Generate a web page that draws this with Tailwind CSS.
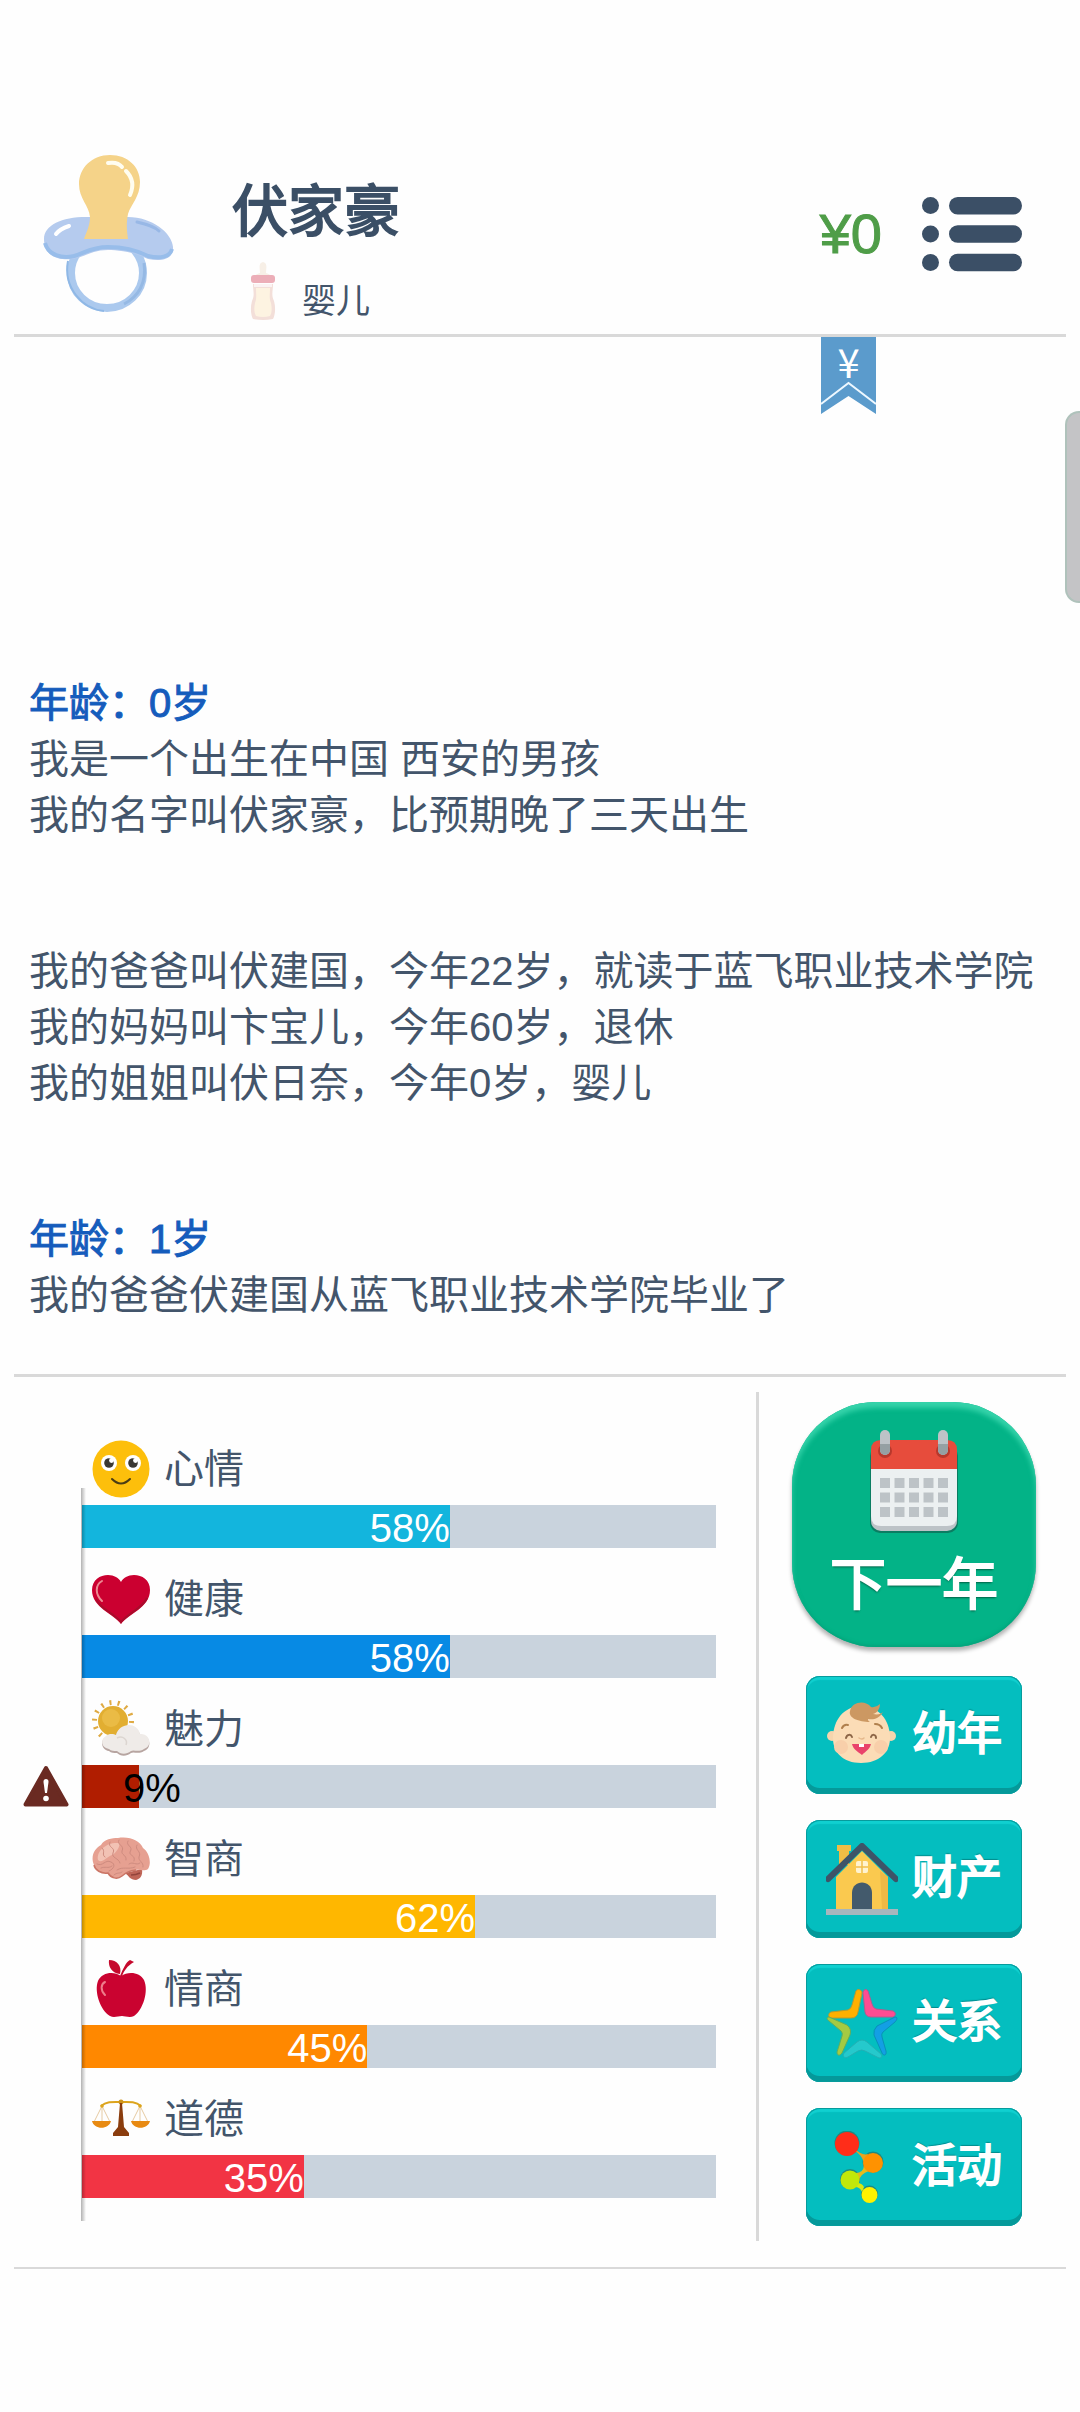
<!DOCTYPE html>
<html lang="zh-CN">
<head>
  <meta charset="UTF-8" />
  <meta name="viewport" content="width=device-width, initial-scale=1.0"/>
  <title>人生模拟</title>
  <script src="https://cdn.jsdelivr.net/npm/@tailwindcss/browser@4"></script>
</head>
<body class="bg-[#fefefe] min-h-screen text-[#43556b] font-['Liberation_Sans','Noto_Sans_CJK_SC',sans-serif]">
  <main class="relative px-[14px]">

    <!-- 顶部：头像、姓名、金钱 -->
    <header class="flex items-start pt-[155px] pb-[14px] pl-7 pr-11 border-b-3 border-[#d9d9d9]">
      <svg class="w-[134px] h-[158px] shrink-0" viewBox="0 0 134 158" aria-hidden="true">
        <ellipse cx="65" cy="118" rx="36" ry="35" fill="none" stroke="#abc9ee" stroke-width="8"/>
        <path d="M26 106C21 132 40 154 62 156" fill="none" stroke="#8fb8e6" stroke-width="2"/>
        <path d="M102 108C105 128 96 142 82 149" fill="none" stroke="#95b9e4" stroke-width="3"/>
        <path d="M2 84C2 70 20 62 44 62H86C110 62 130 78 131 92C132 104 120 107 106 104C92 97 76 95 66 95C50 95 42 102 32 104C14 106 2 100 2 84Z" fill="#b5cbee"/>
        <path d="M3 88C6 100 20 104 32 101C42 98 50 92 66 92C78 92 94 95 106 101C118 104 128 102 130 94" fill="none" stroke="#98bdea" stroke-width="4"/>
        <path d="M95 67C104 69 112 71 117 76" fill="none" stroke="#98b8e6" stroke-width="3" stroke-linecap="round"/>
        <path d="M14 79C17 75 21 73 27 71" fill="none" stroke="#fff" stroke-width="4" stroke-linecap="round"/>
        <path d="M68 0C50 0 37 13 37 29C37 44 47 50 48 62C48 71 44 78 42 84H86C85 76 84 69 86 59C89 49 98 42 98 27C98 12 86 0 68 0Z" fill="#f5d389"/>
        <path d="M66 8C72 7 77 8 80 12" fill="none" stroke="#fffdf0" stroke-width="4" stroke-linecap="round"/>
        <path d="M84 16C91 23 92 31 88 40" fill="none" stroke="#fffdf0" stroke-width="4" stroke-linecap="round"/>
      </svg>
      <div class="flex-1 pt-[25px] pl-14">
        <h1 class="text-[56px] leading-[64px] text-[#3b4f66] [-webkit-text-stroke:2px_#3b4f66]">伏家豪</h1>
        <div class="flex items-end mt-[18px] pl-4">
          <svg class="w-[30px] h-[58px]" viewBox="0 0 30 58" aria-hidden="true">
            <path d="M12 11C12 7 10 1 15 0C20 1 18 7 18 11C22 12 24 14 25 17H5C6 14 8 12 12 11Z" fill="#f7efe6"/>
            <path d="M5 22H25C25 30 23 32 26 39C28 46 27 54 25 57Q15 59 5 57C3 54 2 46 4 39C7 32 5 30 5 22Z" fill="#f3dfd9"/>
            <path d="M8 26H22C22 33 21 36 23 41C24 46 24 51 22 54Q15 56 8 54C6 51 6 46 7 41C9 36 8 33 8 26Z" fill="#fdf3e1"/>
            <rect x="3" y="13" width="24" height="8" rx="3" fill="#ecaeb8"/>
            <path d="M6 22H24V25H6Z" fill="#fbf3f3"/>
          </svg>
          <span class="pl-6 text-[34px] leading-[38px]">婴儿</span>
        </div>
      </div>
      <div class="flex items-center gap-10 h-[158px]">
        <span class="text-[56px] leading-[64px] text-[#4f9d48] [-webkit-text-stroke:1px_#4f9d48]">¥0</span>
        <button type="button" aria-label="菜单">
          <svg class="w-[100px] h-[76px]" viewBox="0 0 100 76" fill="#3b4f66">
            <circle cx="8.5" cy="9.5" r="8.5"/><rect x="27" y="1" width="73" height="17.5" rx="8.7"/>
            <circle cx="8.5" cy="38" r="8.5"/><rect x="27" y="29.300" width="73" height="17.5" rx="8.7"/>
            <circle cx="8.5" cy="66.5" r="8.5"/><rect x="27" y="57.800" width="73" height="17.5" rx="8.7"/>
          </svg>
        </button>
      </div>
    </header>

    <!-- 人生记录 -->
    <section class="relative flex flex-col gap-[100px] pt-[338px] pb-[51px] pl-[15px] text-[40px] leading-[56px] whitespace-nowrap border-b-3 border-[#d9d9d9]">
      <div class="absolute top-0 right-[190px] w-[55px] h-[78px]">
        <svg class="w-full h-full" viewBox="0 0 55 78" aria-hidden="true">
          <path d="M0 0H55V77L27.5 59L0 77Z" fill="#5b9bcc"/>
          <path d="M0 67L27.5 46L55 67" fill="none" stroke="#eef8ff" stroke-width="2"/>
        </svg>
        <span class="absolute inset-x-0 top-0 text-center text-white text-[40px] leading-[48px] font-['Noto_Sans_CJK_SC',sans-serif]">¥</span>
      </div>

      <div>
        <h2 class="text-[#155cbc] [-webkit-text-stroke:1px_#155cbc]">年龄：0岁</h2>
        <p>我是一个出生在中国 西安的男孩</p>
        <p>我的名字叫伏家豪，比预期晚了三天出生</p>
      </div>
      <div>
        <p>我的爸爸叫伏建国，今年22岁，就读于蓝飞职业技术学院</p>
        <p>我的妈妈叫卞宝儿，今年60岁，退休</p>
        <p>我的姐姐叫伏日奈，今年0岁，婴儿</p>
      </div>
      <div>
        <h2 class="text-[#155cbc] [-webkit-text-stroke:1px_#155cbc]">年龄：1岁</h2>
        <p>我的爸爸伏建国从蓝飞职业技术学院毕业了</p>
      </div>
    </section>

    <section class="flex pt-[15px] pb-[26px] border-b-2 border-[#d9d9d9]">

      <!-- 属性条 -->
      <div class="relative flex-1 pt-[26px] pl-[68px] pr-10 border-r-3 border-[#d9d9d9]">
        <div class="absolute z-10 left-[67px] top-24 bottom-5 w-[5px] bg-linear-to-r from-black/30 to-transparent"></div>

        <div class="pt-[15px]">
          <div class="flex items-center gap-[14px] h-[72px] pl-[10px]">
            <svg class="size-[58px]" viewBox="0 0 58 58" aria-hidden="true">
              <circle cx="29" cy="29" r="28.5" fill="#fdbf0b"/>
              <circle cx="17" cy="23" r="8" fill="#fff"/><circle cx="41" cy="23" r="8" fill="#fff"/>
              <circle cx="17" cy="23" r="4.8" fill="#3a3833"/><circle cx="41" cy="23" r="4.8" fill="#3a3833"/>
              <circle cx="19.5" cy="20.500" r="2.400" fill="#fff"/><circle cx="43.500" cy="20.500" r="2.400" fill="#fff"/>
              <path d="M20 39Q29 48 38 39" fill="none" stroke="#4a3c14" stroke-width="2" stroke-linecap="round"/>
            </svg>
            <span class="text-[40px] leading-[48px]">心情</span>
          </div>
          <div class="h-[43px] bg-[#c9d3dd]">
            <div class="h-full bg-[#13b5dd] text-white text-[40px] leading-[47px] text-right" style="width: 58%">58%</div>
          </div>
        </div>

        <div class="pt-[15px]">
          <div class="flex items-center gap-[14px] h-[72px] pl-[10px]">
            <svg class="size-[58px]" viewBox="0 0 58 58" aria-hidden="true">
              <path d="M29 54C22 44 0 38 0 20C0 10 8 5 16 5C22 5 27 8 29 12C31 8 36 5 42 5C50 5 58 10 58 20C58 38 36 44 29 54Z" fill="#cb0030"/>
              <path d="M55 28C50 39 36 43 29 52C22 43 8 39 4 29" fill="none" stroke="#a80c2b" stroke-width="2"/>
              <path d="M10 31C3 24 3 15 10 11" fill="none" stroke="#ec8a92" stroke-width="2" stroke-linecap="round"/>
            </svg>
            <span class="text-[40px] leading-[48px]">健康</span>
          </div>
          <div class="h-[43px] bg-[#c9d3dd]">
            <div class="h-full bg-[#078ae4] text-white text-[40px] leading-[47px] text-right" style="width: 58%">58%</div>
          </div>
        </div>

        <div class="relative pt-[15px]">
          <svg class="absolute -left-[59px] bottom-px w-[46px] h-[42px]" viewBox="0 0 46 42" role="img" aria-label="警告">
            <path d="M23 3L43.5 39.5H2.5Z" fill="#6a2a22" stroke="#6a2a22" stroke-width="4" stroke-linejoin="round"/>
            <path d="M20.5 17C20 13 26 13 25.5 17L24 28H22Z" fill="#fff"/>
            <circle cx="23" cy="33.5" r="2.8" fill="#fff"/>
          </svg>
          <div class="flex items-center gap-[14px] h-[72px] pl-[10px]">
            <svg class="size-[58px]" viewBox="0 0 58 58" aria-hidden="true">
              <circle cx="21" cy="21" r="18.500" fill="none" stroke="#dfaa43" stroke-width="5" stroke-dasharray="2 6.300"/>
              <circle cx="21" cy="21" r="15" fill="#e2ae31"/>
              <circle cx="19" cy="18" r="9" fill="#eabb45"/>
              <path d="M17 51C9 50 8 40 14 37C17 34 22 35 24 35C27 24 45 22 48 35C58 34 61 48 52 51C46 55 42 51 39 53C34 57 28 56 25 53C22 53 19 53 17 51Z" fill="#b7a5a1"/>
              <path d="M17 49C9 48 8 39 14 36C17 33 22 34 24 35C27 23 45 21 48 34C58 33 61 46 52 49C46 53 42 49 39 51C34 55 28 54 25 51C22 51 19 51 17 49Z" fill="#efebe8"/>
              <path d="M25 38C31 35 36 40 34 45" fill="none" stroke="#dcd5d0" stroke-width="1.5"/>
            </svg>
            <span class="text-[40px] leading-[48px]">魅力</span>
          </div>
          <div class="h-[43px] bg-[#c9d3dd]">
            <div class="relative h-full bg-[#b01d00] text-black text-[40px] leading-[47px]" style="width: 9%">
              <span class="absolute left-[41px] top-0">9%</span>
            </div>
          </div>
        </div>

        <div class="pt-[15px]">
          <div class="flex items-center gap-[14px] h-[72px] pl-[10px]">
            <svg class="size-[58px]" viewBox="0 0 58 58" aria-hidden="true">
              <path d="M33 43L50 39C51 46 48 49 44 50C38 50 37 46 33 43Z" fill="#bf6557"/>
              <path d="M2 35C-2 26 3 18 9 15C12 9 20 8 26 8C38 6 48 11 51 18C57 22 60 33 56 39C52 42 47 39 44 40C37 41 35 42 30 46C25 50 19 48 16 43C9 44 3 40 2 35Z" fill="#e6a091"/>
              <path d="M6 30C4 20 16 12 26 13C30 13 25 23 20 25C14 27 10 34 6 30Z" fill="#f2c2b4"/>
              <path d="M5 34C11 37 13 29 19 32C24 34 22 39 17 41M10 18C14 21 9 25 13 27M18 12C15 18 24 17 21 23C19 28 27 28 28 33M27 10C24 15 33 15 30 21C29 25 35 25 34 30M36 11C33 16 42 16 38 22C37 26 44 25 42 31M45 15C42 20 50 21 47 27C46 31 52 32 51 37M25 40C31 36 36 40 43 37M22 45C25 42 28 44 30 42M9 38C13 36 16 39 20 36M37 34C41 31 44 36 48 33" fill="none" stroke="#ce8b7f" stroke-width="1" stroke-linecap="round"/>
              <path d="M2 35C3 40 9 44 16 43C19 48 25 50 30 46C35 42 37 41 44 40" fill="none" stroke="#cb7667" stroke-width="1.5"/>
              <path d="M39 45Q44 45 48 43" fill="none" stroke="#93443b" stroke-width="1.5"/>
            </svg>
            <span class="text-[40px] leading-[48px]">智商</span>
          </div>
          <div class="h-[43px] bg-[#c9d3dd]">
            <div class="h-full bg-[#ffb700] text-white text-[40px] leading-[47px] text-right" style="width: 62%">62%</div>
          </div>
        </div>

        <div class="pt-[15px]">
          <div class="flex items-center gap-[14px] h-[72px] pl-[10px]">
            <svg class="size-[58px]" viewBox="0 0 58 58" aria-hidden="true">
              <path d="M29 16C36 11 48 12 52 20C57 31 51 50 42 56C38 58 33 56 30 56C26 56 22 58 18 56C8 50 2 31 6 21C10 12 22 11 29 16Z" fill="#ca0330"/>
              <path d="M28 14C20 13 16 7 17 0C25 0 30 6 28 14Z" fill="#c5092d"/>
              <path d="M28 16C31 9 34 2 38 0L42 2C35 6 32 11 30 16Z" fill="#c5092d"/>
              <path d="M13 35C8 30 9 24 13 22" fill="none" stroke="#ee7d8b" stroke-width="2" stroke-linecap="round"/>
            </svg>
            <span class="text-[40px] leading-[48px]">情商</span>
          </div>
          <div class="h-[43px] bg-[#c9d3dd]">
            <div class="h-full bg-[#ff8800] text-white text-[40px] leading-[47px] text-right" style="width: 45%">45%</div>
          </div>
        </div>

        <div class="pt-[15px]">
          <div class="flex items-center gap-[14px] h-[72px] pl-[10px]">
            <svg class="size-[58px]" viewBox="0 0 58 58" aria-hidden="true">
              <path d="M10 16L2 32M10 16V32M10 16L18 32M48 16L40 32M48 16V32M48 16L56 32" fill="none" stroke="#e6cba3" stroke-width="1"/>
              <path d="M9 16C15 11 22 12 29 12C36 12 43 11 49 16" fill="none" stroke="#dca41c" stroke-width="2"/>
              <circle cx="10" cy="16" r="1.8" fill="#dca41c"/><circle cx="48" cy="16" r="1.8" fill="#dca41c"/>
              <circle cx="29" cy="12" r="2.5" fill="#cf951d"/>
              <path d="M28 13H30L32 37L37 43V46H21V43L26 37Z" fill="#8a3d0e"/>
              <path d="M0 31H19C17 40 2 40 0 31ZM39 31H58C56 40 41 40 39 31Z" fill="#e88a12"/>
            </svg>
            <span class="text-[40px] leading-[48px]">道德</span>
          </div>
          <div class="h-[43px] bg-[#c9d3dd]">
            <div class="h-full bg-[#f23444] text-white text-[40px] leading-[47px] text-right" style="width: 35%">35%</div>
          </div>
        </div>
      </div>

      <!-- 操作按钮 -->
      <nav class="flex flex-col items-center w-[307px] pt-[10px] pb-[15px] pl-[3px]">
        <button type="button" class="flex flex-col items-center w-[244px] h-[245px] pt-7 mb-[29px] rounded-[84px] bg-[#03b387] text-white shadow-[0_4px_4px_rgba(0,0,0,0.3),inset_0_6px_5px_#35d3aa,inset_0_-2px_3px_#05a57c]">
          <svg class="w-[88px] h-[103px]" viewBox="0 0 88 103" aria-hidden="true">
            <rect x="0" y="16" width="88" height="87" rx="10" fill="#0b7d62"/>
            <rect x="1" y="14" width="86" height="87" rx="10" fill="#bdc3c7"/>
            <path d="M1 38H87V86Q87 96 77 96H11Q1 96 1 86Z" fill="#ecf0f1"/>
            <path d="M1 39V20Q1 10 11 10H77Q87 10 87 20V39Z" fill="#e74c3c"/>
            <circle cx="15" cy="21" r="7" fill="#b8382c"/><circle cx="73" cy="21" r="7" fill="#b8382c"/>
            <rect x="10" y="0" width="10" height="25" rx="5" fill="#bdc3c7"/><rect x="68" y="0" width="10" height="25" rx="5" fill="#bdc3c7"/>
            <path d="M10 14H20V20A5 5 0 0 1 10 20ZM68 14H78V20A5 5 0 0 1 68 20Z" fill="#95a0a3"/>
            <path d="M10 53H78M10 67.500H78M10 82H78" fill="none" stroke="#bdc3c7" stroke-width="10" stroke-dasharray="10 4.5"/>
          </svg>
          <span class="mt-5 text-[56px] leading-[64px] [-webkit-text-stroke:2px_#fff] [text-shadow:0_2px_2px_rgba(0,60,40,0.7)]">下一年</span>
        </button>

        <div class="flex flex-col gap-[26px]">
          <button type="button" class="flex items-center justify-center gap-[14px] w-[216px] h-[118px] rounded-[14px] bg-[#04bebf] text-white shadow-[inset_0_0_0_1px_#079b9c,inset_0_-6px_0_#05999a,inset_0_4px_1px_#10d0d0]">
            <svg class="size-[72px]" viewBox="0 0 72 72" aria-hidden="true">
              <circle cx="6" cy="37" r="5" fill="#f6d5ad"/><circle cx="65" cy="37" r="5" fill="#f6d5ad"/>
              <path d="M35 7C16 8 8 22 7 37C6 53 17 64 35 64C53 64 65 53 64 37C63 21 54 8 35 7Z" fill="#fbdcb6"/>
              <circle cx="15" cy="48" r="7" fill="#f8cfaa"/><circle cx="55" cy="48" r="7" fill="#f8cfaa"/>
              <path d="M24 12C26 2 40 1 45 8Q50 9 54 5C54 10 51 14 47 15C52 16 55 15 57 13C53 20 47 21 42 20C42 21 42 22 44 23C33 23 22 19 24 12Z" fill="#cc9862"/>
              <path d="M16 29Q18 25 22 26M49 25Q54 25 56 29" fill="none" stroke="#b07f4c" stroke-width="2" stroke-linecap="round"/>
              <path d="M20 39C21 35 25 35 26 38M45 38C46 35 50 35 50 39" fill="none" stroke="#8d6647" stroke-width="2" stroke-linecap="round"/>
              <path d="M33 39Q36 41 38 39" fill="none" stroke="#e5b88c" stroke-width="1.5" stroke-linecap="round"/>
              <path d="M26 45H45C44 50 39 53 36 56C32 53 27 50 26 45Z" fill="#e9436b"/>
              <path d="M33 45H38V48H33Z" fill="#fff"/>
            </svg>
            <span class="text-[45px] leading-[56px] [-webkit-text-stroke:2px_#fff] [text-shadow:0_-2px_1px_rgba(0,90,90,0.5)]">幼年</span>
          </button>

          <button type="button" class="flex items-center justify-center gap-[14px] w-[216px] h-[118px] rounded-[14px] bg-[#04bebf] text-white shadow-[inset_0_0_0_1px_#079b9c,inset_0_-6px_0_#05999a,inset_0_4px_1px_#10d0d0]">
            <svg class="size-[72px]" viewBox="0 0 72 72" aria-hidden="true">
              <path d="M11 2H25V8H23V22H13V8H11Z" fill="#f0bd45"/>
              <path d="M10 34L36 8L62 34V66H10Z" fill="#fac94f"/>
              <path d="M54 28L62 34V66H56Z" fill="#efb945"/>
              <path d="M2 36L36 3L70 36" fill="none" stroke="#3e5468" stroke-width="6" stroke-linecap="round" stroke-linejoin="round"/>
              <rect x="30" y="18" width="12" height="12" rx="2" fill="#fff3d0"/>
              <path d="M36 18V30M30 24H42" stroke="#f2be4b" stroke-width="1.5"/>
              <path d="M26 66V50C26 36 46 36 46 50V66Z" fill="#435a6c"/>
              <rect x="0" y="66" width="72" height="6" fill="#a7b6bd"/>
            </svg>
            <span class="text-[45px] leading-[56px] [-webkit-text-stroke:2px_#fff] [text-shadow:0_-2px_1px_rgba(0,90,90,0.5)]">财产</span>
          </button>

          <button type="button" class="flex items-center justify-center gap-[14px] w-[216px] h-[118px] rounded-[14px] bg-[#04bebf] text-white shadow-[inset_0_0_0_1px_#079b9c,inset_0_-6px_0_#05999a,inset_0_4px_1px_#10d0d0]">
            <svg class="size-[72px]" viewBox="0 0 72 72" aria-hidden="true">
              <g stroke-width="1" stroke-linejoin="round">
                <path d="M30 4C32 1 36 3 36 6L32 25Q31 31 25 31H5C2 31 2 26 5 25L22 23Q25 22 26 18Z" fill="#ffb000" stroke="#b99a2e"/>
                <path d="M42 4C40 1 37 3 37 6L39 25Q40 30 45 30H67C70 29 70 25 67 24L50 22Q47 21 46 17Z" fill="#ff4c92" stroke="#b05c8e"/>
                <path d="M3 30C0 30 1 33 3 34L15 44Q17 46 16 49L11 65C11 69 14 69 16 66L24 48Q26 42 21 38Z" fill="#a4ca42" stroke="#5fae5e"/>
                <path d="M69 30C72 30 71 33 69 35L57 45Q55 47 56 50L60 64C61 69 57 69 56 66L48 48Q47 43 51 39Z" fill="#139fe4" stroke="#0891b8"/>
                <path d="M18 66L31 55Q36 51 41 55L55 67C57 71 54 72 51 70L39 64Q36 62 32 64L22 70C18 72 16 69 18 66Z" fill="#25c9cc" stroke="#22b0b4"/>
              </g>
            </svg>
            <span class="text-[45px] leading-[56px] [-webkit-text-stroke:2px_#fff] [text-shadow:0_-2px_1px_rgba(0,90,90,0.5)]">关系</span>
          </button>

          <button type="button" class="flex items-center justify-center gap-[14px] w-[216px] h-[118px] rounded-[14px] bg-[#04bebf] text-white shadow-[inset_0_0_0_1px_#079b9c,inset_0_-6px_0_#05999a,inset_0_4px_1px_#10d0d0]">
            <svg class="size-[72px]" viewBox="0 0 72 72" aria-hidden="true">
              <g fill="#1f8a80">
                <circle cx="21" cy="12" r="12.500"/><circle cx="47" cy="31" r="10.500"/><circle cx="24" cy="48" r="10"/><circle cx="43.5" cy="63" r="8.5"/>
              </g>
              <path d="M29 18Q36 25 42 23L38 32Q36 24 29 20Z" fill="#e6a420"/>
              <path d="M38 35Q37 42 30 42L33 50Q34 43 43 40Z" fill="#e3bb1c"/>
              <path d="M31 52Q36 52 38 56L36 61Q34 56 29 56Z" fill="#d5e912"/>
              <circle cx="21" cy="13" r="12" fill="#ff2d19"/>
              <circle cx="47" cy="32" r="10" fill="#ff9200"/>
              <circle cx="24" cy="49" r="9.5" fill="#c1e80a"/>
              <circle cx="43.5" cy="64" r="8" fill="#fff200"/>
            </svg>
            <span class="text-[45px] leading-[56px] [-webkit-text-stroke:2px_#fff] [text-shadow:0_-2px_1px_rgba(0,90,90,0.5)]">活动</span>
          </button>
        </div>
      </nav>
    </section>

    <!-- 侧边拉手 -->
    <div class="absolute right-0 top-[411px] w-[15px] h-[192px] rounded-l-[14px] bg-[#c4c4c6] border-2 border-r-0 border-[#afc2bb]"></div>
  </main>
</body>
</html>
